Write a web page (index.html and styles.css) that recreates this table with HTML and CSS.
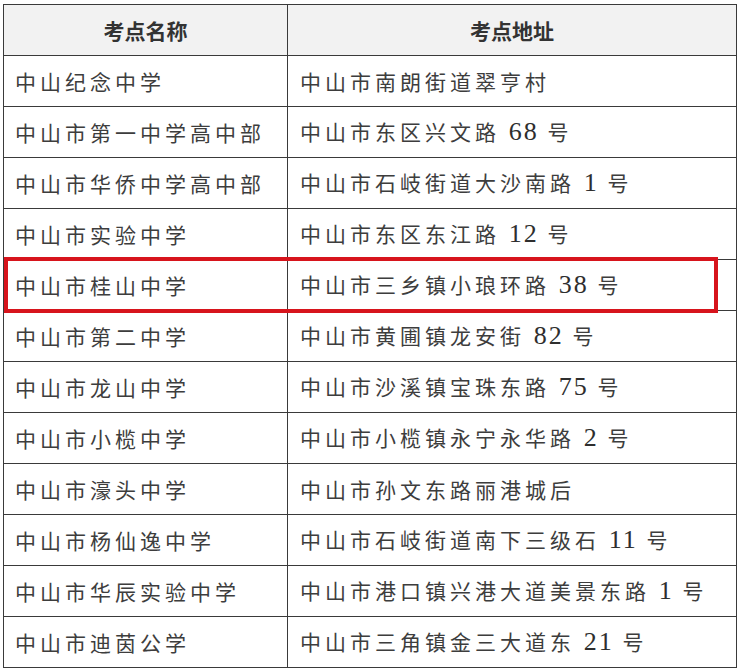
FILE: index.html
```html
<!DOCTYPE html>
<html lang="zh-CN">
<head>
<meta charset="utf-8">
<title>考点</title>
<link rel="stylesheet" href="styles.css">
</head>
<body>
<div class="wrap">
  <table class="sites">
    <thead>
      <tr><th class="c1">考点名称</th><th class="c2">考点地址</th></tr>
    </thead>
    <tbody>
      <tr><td>中山纪念中学</td><td>中山市南朗街道翠亨村</td></tr>
      <tr><td>中山市第一中学高中部</td><td>中山市东区兴文路 <span class="num">68</span> 号</td></tr>
      <tr><td>中山市华侨中学高中部</td><td>中山市石岐街道大沙南路 <span class="num">1</span> 号</td></tr>
      <tr><td>中山市实验中学</td><td>中山市东区东江路 <span class="num">12</span> 号</td></tr>
      <tr><td>中山市桂山中学</td><td>中山市三乡镇小琅环路 <span class="num">38</span> 号</td></tr>
      <tr><td>中山市第二中学</td><td>中山市黄圃镇龙安街 <span class="num">82</span> 号</td></tr>
      <tr><td>中山市龙山中学</td><td>中山市沙溪镇宝珠东路 <span class="num">75</span> 号</td></tr>
      <tr><td>中山市小榄中学</td><td>中山市小榄镇永宁永华路 <span class="num">2</span> 号</td></tr>
      <tr><td>中山市濠头中学</td><td>中山市孙文东路丽港城后</td></tr>
      <tr><td>中山市杨仙逸中学</td><td>中山市石岐街道南下三级石 <span class="num">11</span> 号</td></tr>
      <tr><td>中山市华辰实验中学</td><td>中山市港口镇兴港大道美景东路 <span class="num">1</span> 号</td></tr>
      <tr><td>中山市迪茵公学</td><td>中山市三角镇金三大道东 <span class="num">21</span> 号</td></tr>
    </tbody>
  </table>
  <div class="highlight"></div>
</div>
</body>
</html>
```

FILE: styles.css
```css
html, body {
  margin: 0;
  padding: 0;
  background: #ffffff;
}

.wrap {
  position: relative;
  padding: 4px 0 0 3px;
  width: 739px;
  height: 670px;
  box-sizing: border-box;
}

.sites {
  border-collapse: collapse;
  width: 734px;
  table-layout: fixed;
  font-family: "Noto Sans CJK SC", "Noto Sans", sans-serif;
  color: #3d3d3d;
}

.sites th,
.sites td {
  border: 1px solid #3a3a3a;
  height: 51px;
  padding: 0;
  vertical-align: middle;
  box-sizing: border-box;
}

.sites th {
  background: #f2f2f2;
  font-size: 21px;
  font-weight: 700;
  color: #333333;
  text-align: center;
}

.sites .c1 {
  width: 284px;
}

.sites td {
  font-size: 21px;
  letter-spacing: 4px;
  white-space: nowrap;
  text-align: left;
  line-height: 1;
}

.sites td:first-child {
  padding-left: 11px;
}

.sites td:last-child {
  padding-left: 12px;
}

.num {
  font-family: "Liberation Serif", serif;
  font-size: 26px;
  letter-spacing: 2px;
  color: #2e2e2e;
}

.highlight {
  position: absolute;
  left: 4px;
  top: 257px;
  width: 714px;
  height: 56px;
  border: 4px solid #d7141c;
  box-sizing: border-box;
  pointer-events: none;
}
```
